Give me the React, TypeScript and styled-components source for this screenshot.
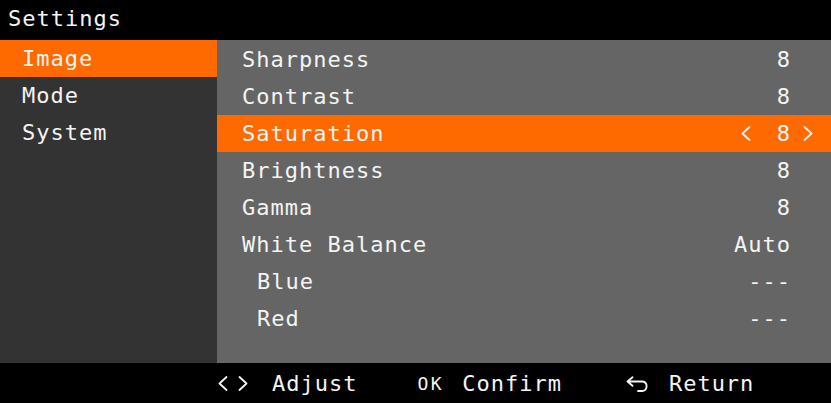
import styled, { createGlobalStyle } from 'styled-components';

const ORANGE = '#ff6a00';

const GlobalStyle = createGlobalStyle`
    html, body {
        margin: 0;
        padding: 0;
        background: #000;
    }
    body {
        font-family: 'DejaVu Sans Mono', 'Liberation Mono', monospace;
        color: #f4f4f4;
    }
`;

type Item = { label: string; value: string; indent?: boolean };

const menu = ['Image', 'Mode', 'System'];

const items: Item[] = [
    { label: 'Sharpness', value: '8' },
    { label: 'Contrast', value: '8' },
    { label: 'Saturation', value: '8' },
    { label: 'Brightness', value: '8' },
    { label: 'Gamma', value: '8' },
    { label: 'White Balance', value: 'Auto' },
    { label: 'Blue', value: '---', indent: true },
    { label: 'Red', value: '---', indent: true },
];

const Chevron: React.FC<{ dir: 'left' | 'right' }> = ({ dir }) => (
    <svg width="10" height="15" viewBox="0 0 10 15" fill="none">
        <polyline
            points={dir === 'left' ? '8.5,1 1.5,7.5 8.5,14' : '1.5,1 8.5,7.5 1.5,14'}
            stroke="currentColor"
            strokeWidth="1.8"
            strokeLinecap="round"
            strokeLinejoin="round"
        />
    </svg>
);

const ReturnIcon: React.FC = () => (
    <svg width="24" height="16" viewBox="0 0 24 16" fill="none">
        <path
            d="M6.5 1.2 L1.5 5.5 L6.5 9.8 M1.5 5.5 H16.5 A4.8 4.8 0 0 1 16.5 15 H12"
            stroke="currentColor"
            strokeWidth="1.8"
            strokeLinecap="round"
            strokeLinejoin="round"
        />
    </svg>
);

const App: React.FC = () => {
    const activeMenu = 0;
    const activeItem = 2;

    return (
        <>
            <GlobalStyle />
            <Screen>
                <TitleBar>Settings</TitleBar>
                <Main>
                    <Sidebar>
                        {menu.map((m, i) => (
                            <MenuRow key={m} $active={i === activeMenu}>
                                {m}
                            </MenuRow>
                        ))}
                    </Sidebar>
                    <Panel>
                        {items.map((it, i) => (
                            <ItemRow key={it.label} $active={i === activeItem}>
                                <Label $indent={it.indent}>{it.label}</Label>
                                <ValueGroup>
                                    <LeftArrow $shown={i === activeItem}>
                                        <Chevron dir="left" />
                                    </LeftArrow>
                                    <Value>{it.value}</Value>
                                    <RightArrow $shown={i === activeItem}>
                                        <Chevron dir="right" />
                                    </RightArrow>
                                </ValueGroup>
                            </ItemRow>
                        ))}
                    </Panel>
                </Main>
                <Footer>
                    <Hint>
                        <ChevronPair>
                            <Chevron dir="left" />
                            <Chevron dir="right" />
                        </ChevronPair>
                        <span>Adjust</span>
                    </Hint>
                    <Hint $gap={18}>
                        <OkKey>OK</OkKey>
                        <span>Confirm</span>
                    </Hint>
                    <Hint $gap={19} $lead={64}>
                        <IconKey>
                            <ReturnIcon />
                        </IconKey>
                        <span>Return</span>
                    </Hint>
                </Footer>
            </Screen>
        </>
    );
};

export default App;

const Screen = styled.div`
    width: 831px;
    height: 403px;
    display: flex;
    flex-direction: column;
    background: #000;
    font-size: 22px;
    letter-spacing: 1px;
    overflow: hidden;
`;

const TitleBar = styled.div`
    height: 40px;
    display: flex;
    align-items: center;
    padding-left: 8px;
    padding-bottom: 3px;
    box-sizing: border-box;
    background: #000;
`;

const Main = styled.div`
    display: flex;
    height: 323px;
`;

const Sidebar = styled.div`
    width: 217px;
    background: #333333;
    display: flex;
    flex-direction: column;
`;

const MenuRow = styled.div<{ $active?: boolean }>`
    height: 37px;
    display: flex;
    align-items: center;
    padding-left: 22px;
    background: ${({ $active }) => ($active ? ORANGE : 'transparent')};
`;

const Panel = styled.div`
    flex: 1;
    background: #656565;
    display: flex;
    flex-direction: column;
    padding-top: 1px;
`;

const ItemRow = styled.div<{ $active?: boolean }>`
    height: 37px;
    display: flex;
    align-items: center;
    justify-content: space-between;
    padding: 0 18px 0 25px;
    background: ${({ $active }) => ($active ? ORANGE : 'transparent')};
`;

const Label = styled.span<{ $indent?: boolean }>`
    padding-left: ${({ $indent }) => ($indent ? '15px' : '0')};
`;

const ValueGroup = styled.div`
    display: flex;
    align-items: center;
`;

const LeftArrow = styled.span<{ $shown?: boolean }>`
    display: flex;
    margin-right: 26px;
    visibility: ${({ $shown }) => ($shown ? 'visible' : 'hidden')};
`;

const RightArrow = styled(LeftArrow)`
    margin-right: 0;
    margin-left: 13px;
`;

const Value = styled.span`
    margin-right: -1px;
`;

const Footer = styled.div`
    height: 40px;
    display: flex;
    align-items: center;
    padding-left: 218px;
    gap: 60px;
    background: #000;
`;

const Hint = styled.div<{ $gap?: number; $lead?: number }>`
    display: flex;
    align-items: center;
    gap: ${({ $gap }) => $gap ?? 24}px;
    margin-left: ${({ $lead }) => ($lead ? $lead - 60 : 0)}px;
`;

const ChevronPair = styled.span`
    display: flex;
    gap: 10px;
    padding-top: 1px;
`;

const OkKey = styled.span`
    font-size: 18px;
    letter-spacing: 2.5px;
`;

const IconKey = styled.span`
    display: flex;
    padding-top: 1px;
`;
